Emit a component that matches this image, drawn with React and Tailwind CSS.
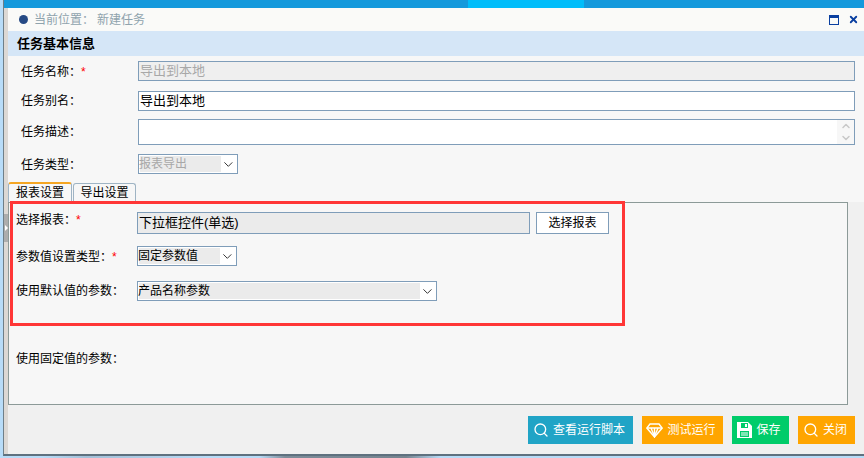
import React from 'react';
import { Search, ChevronDown, ChevronUp, X } from 'lucide-react';

const labelCls = 'text-[12px] text-black leading-none';

const Star = () => <span className="text-[12px] text-[#f00]">*</span>;

const SaveIcon = () => (
  <svg width="15" height="16" viewBox="0 0 15 16">
    <path fill="#fff" fillRule="evenodd" d="M0 0h11l4 4v12H0zM4 1v5h7V1zM8 2h2v3H8zM3 9v6h9V9z" />
    <path fill="#fff" d="M4 10.500h7v1H4zM4 12.500h7v1H4z" />
  </svg>
);

const GemIcon = () => (
  <svg width="17" height="15" viewBox="0 0 17 15" fill="none" stroke="#fff" strokeWidth="1.400">
    <path d="M4 1h9l3.200 4L8.500 14 .8 5z" />
    <path d="M1 5h15M5 5l3.500 8.500L12 5M8.500 5v8" />
  </svg>
);

const SelectBox = ({ value, width, disabled, fillWidth }) => (
  <div className={`flex items-center h-[20px] bg-white border border-[#7f9db9] pl-[1px] py-[1px] ${width}`}>
    <div className={`h-full flex items-center bg-[#ebebeb] text-[12px] leading-none ${fillWidth} ${disabled ? 'text-[#a8a8a8]' : 'text-black'}`}>
      <span className="-ml-[1px]">{value}</span>
    </div>
    <ChevronDown className="ml-auto mr-[1px] text-[#333]" size={15} strokeWidth={1.6} />
  </div>
);

const FooterBtn = ({ color, icon, children, width }) => (
  <button className={`flex items-center justify-center gap-[4px] h-[28px] pr-[3px] text-white text-[12px] ${color} ${width}`}>
    {icon}
    {children}
  </button>
);

const App = () => {
  return (
    <div className="w-[864px] h-[458px] overflow-hidden flex flex-col bg-[linear-gradient(90deg,#b8dcf8_5%,#a3c0d8_10%,#b0cfe8_18%,#b8dcf8_24%,#b8dcf8_30%,#7d8c99_33%,#76848f_47%,#b8dcf8_51%)] font-['Liberation_Sans','Noto_Sans_CJK_SC',sans-serif]">
      <div className="flex flex-col h-[456px] ml-[3px] border-l border-[#6f7f88] border-b-2 border-b-[#5f717f] bg-[#f0f0f0]">
        {/* top bar */}
        <div className="flex h-[8px] shrink-0 bg-[#1499dc]">
          <div className="w-[464px]" />
          <div className="w-[116px] bg-[#00bdfa]" />
        </div>

        <div className="flex flex-1 min-h-0">
          {/* splitter */}
          <div className="w-[4px] bg-[#dcd8d4] shrink-0 flex items-center">
            <div className="w-full h-[28px] mb-[6px] bg-[#adadad] flex items-center">
              <div className="w-0 h-0 ml-[1px] border-y-[3px] border-y-transparent border-l-[3px] border-l-white" />
            </div>
          </div>

          <div className="flex-1 min-w-0 flex flex-col">
            {/* location */}
            <div className="flex items-center h-[23px] shrink-0 bg-[#fafaf8] pl-[11px] pr-[5px]">
              <span className="w-[9px] h-[9px] rounded-full bg-[#264a85]" />
              <span className="ml-[6px] text-[12px] text-[#8fa3ad]">当前位置：</span>
              <span className="ml-[3px] text-[12px] text-[#8fa3ad]">新建任务</span>
              <div className="ml-auto flex items-center gap-[9px]">
                <div className="w-[10px] h-[10px] border border-[#0a3fa0] border-t-[3px]" />
                <X size={11} strokeWidth={4} className="text-[#0a3fa0]" />
              </div>
            </div>

            {/* section title */}
            <div className="flex items-center h-[25px] shrink-0 bg-[#d5e6f7] pl-[9px] text-[13px] font-bold text-black">任务基本信息</div>

            {/* basic form */}
            <div className="flex flex-col shrink-0 bg-[#f7f7f7] pr-[9px] pt-[5px] pl-[13px] h-[126px]">
              <div className="flex items-center h-[20px]">
                <div className={`w-[117px] pt-[1px] ${labelCls}`}>任务名称：<Star /></div>
                <div className="flex-1 h-[20px] flex items-center pl-[1px] bg-[#efefef] border border-[#7f9db9] text-[13px] text-[#a8a8a8]">导出到本地</div>
              </div>
              <div className="flex items-center h-[20px] mt-[10px]">
                <div className={`w-[117px] ${labelCls}`}>任务别名：</div>
                <div className="flex-1 h-[20px] flex items-center pl-[1px] bg-white border border-[#7f9db9] text-[13px] text-black">导出到本地</div>
              </div>
              <div className="flex items-start h-[26px] mt-[8px]">
                <div className={`w-[117px] pt-[7px] ${labelCls}`}>任务描述：</div>
                <div className="relative flex-1 h-[26px] bg-white border border-[#7f9db9]">
                  <div className="absolute right-0 top-0 w-[17px] h-full bg-[#f7f7f7] flex flex-col items-center text-[#c8c8c8]">
                    <ChevronUp size={12} strokeWidth={3} />
                    <ChevronDown size={12} strokeWidth={3} />
                  </div>
                </div>
              </div>
              <div className="flex items-center h-[20px] mt-[9px]">
                <div className={`w-[117px] pt-[2px] ${labelCls}`}>任务类型：</div>
                <SelectBox value="报表导出" width="w-[100px]" fillWidth="w-[83px]" disabled />
              </div>
            </div>

            {/* tabs */}
            <div className="flex items-end h-[20px] shrink-0 bg-[#f7f7f7]">
              <div className="flex items-center justify-center w-[64px] h-[20px] bg-[#f7f7f7] border border-b-0 border-[#9fb4c4] border-t-2 border-t-[#f5a623] rounded-t-[3px] text-[12px] text-black">报表设置</div>
              <div className="flex items-center justify-center w-[63px] h-[19px] ml-[1px] bg-[#f7f7f7] border border-b-0 border-[#9fb4c4] rounded-t-[3px] text-[12px] text-black">导出设置</div>
            </div>

            {/* tab panel */}
            <div className="relative mr-[16px] h-[203px] shrink-0 bg-[#f7f7f7] border border-[#8c9a98] flex flex-col">
              <div className="absolute left-[1px] top-[-2px] w-[615px] h-[125px] border-[3px] border-[#ff3636]" />
              <div className="flex items-start pl-[7px] pt-[9px]">
                <div className={`w-[121px] pt-[2px] ${labelCls}`}>选择报表：<Star /></div>
                <div className="w-[393px] h-[22px] flex items-center pl-[1px] bg-[#ebebeb] border border-[#7f9db9] text-[13px] text-black">下拉框控件(单选)</div>
                <button className="ml-[6px] w-[73px] h-[22px] bg-white border border-[#7f9db9] text-[12px] text-black">选择报表</button>
              </div>
              <div className="flex items-center pl-[7px] mt-[12px]">
                <div className={`w-[121px] pt-[1px] ${labelCls}`}>参数值设置类型：<Star /></div>
                <SelectBox value="固定参数值" width="w-[100px]" fillWidth="w-[83px]" />
              </div>
              <div className="flex items-center pl-[7px] mt-[15px]">
                <div className={`w-[121px] ${labelCls}`}>使用默认值的参数：</div>
                <SelectBox value="产品名称参数" width="w-[300px]" fillWidth="w-[283px]" />
              </div>
              <div className={`pl-[7px] mt-[52px] ${labelCls}`}>使用固定值的参数：</div>
            </div>

            {/* footer */}
            <div className="flex flex-1 items-start justify-end gap-[9px] pt-[11px] pr-[9px] bg-[#f0f0f0]">
              <FooterBtn color="bg-[#20a4c6]" width="w-[105px]" icon={<Search size={16} strokeWidth={2} />}>查看运行脚本</FooterBtn>
              <FooterBtn color="bg-[#ffa500]" width="w-[81px]" icon={<GemIcon />}>测试运行</FooterBtn>
              <FooterBtn color="bg-[#00cc6a]" width="w-[57px]" icon={<SaveIcon />}>保存</FooterBtn>
              <FooterBtn color="bg-[#ffa500]" width="w-[57px]" icon={<Search size={16} strokeWidth={2} />}>关闭</FooterBtn>
            </div>
          </div>
        </div>
      </div>
    </div>
  );
};

export default App;
